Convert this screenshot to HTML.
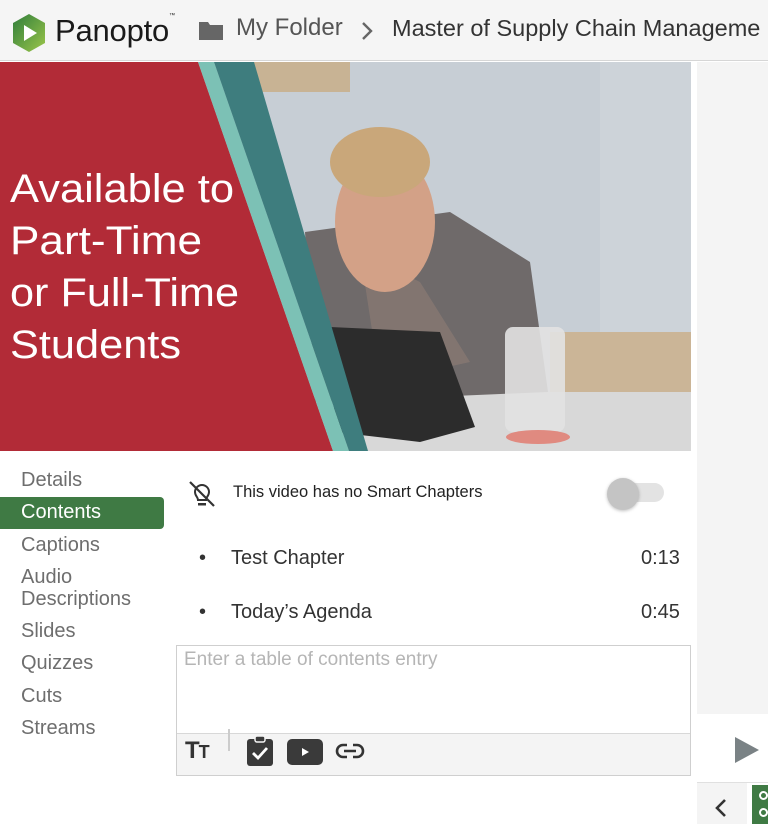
<!DOCTYPE html>
<html><head><meta charset="utf-8"><style>
*{margin:0;padding:0;box-sizing:border-box}
body{width:768px;height:824px;overflow:hidden;background:#fff;font-family:"Liberation Sans",Arial,sans-serif;position:relative}
.hdr{position:absolute;left:0;top:0;width:768px;height:61px;background:#f5f5f5;border-bottom:1px solid #d6d6d6}
.abs{position:absolute}
.nav div{position:absolute;left:21px;font-size:20px;color:#6e6e6e}
</style></head><body>
<div class="hdr">
 <svg class="abs" style="left:11px;top:13px" width="36" height="40" viewBox="0 0 36 40">
  <defs><linearGradient id="g" x1="0" y1="0" x2="1" y2="1"><stop offset="0" stop-color="#2f7d3b"/><stop offset="1" stop-color="#9cc64a"/></linearGradient></defs>
  <polygon points="18,1 34,10 34,30 18,39 2,30 2,10" fill="url(#g)"/>
  <polygon points="13,12 26,20 13,28" fill="#fff"/>
 </svg>
 <div class="abs" style="left:55px;top:13px;font-size:31px;color:#1a1a1a;letter-spacing:-0.2px">Panopto<span style="font-size:6px;vertical-align:top">™</span></div>
 <svg class="abs" style="left:199px;top:20px" width="24" height="20" viewBox="0 0 24 20"><path d="M0 2h9l2 3h13v15H0z" fill="#666"/></svg>
 <div class="abs" style="left:236px;top:14px;font-size:24px;color:#555">My Folder</div>
 <svg class="abs" style="left:360px;top:21px" width="14" height="20" viewBox="0 0 14 20"><path d="M3 2l8 8-8 8" stroke="#666" stroke-width="2.4" fill="none"/></svg>
 <div class="abs" style="left:392px;top:15px;font-size:23.5px;color:#333;white-space:nowrap">Master of Supply Chain Manageme</div>
</div>

<svg class="abs" style="left:0;top:62px" width="691" height="389" viewBox="0 0 691 389">
 <rect width="691" height="389" fill="#c7ced5"/>
 <rect x="250" y="0" width="100" height="30" fill="#c8b394"/>
 <rect x="600" y="0" width="91" height="280" fill="#cdd3d9"/>
 <rect x="550" y="270" width="141" height="80" fill="#cbb597"/>
 <rect x="300" y="330" width="391" height="59" fill="#d8d8d8"/>
 <path d="M305 170 L450 150 L530 200 L548 330 L315 340 Z" fill="#6f6a6a"/>
 <path d="M360 190 L420 220 L470 300 L380 320 Z" fill="#8a7b74" opacity=".7"/>
 <ellipse cx="385" cy="160" rx="50" ry="70" fill="#d3a187"/>
 <ellipse cx="380" cy="100" rx="50" ry="35" fill="#c9a77a"/>
 <path d="M330 265 L440 270 L475 365 L420 380 L335 370 Z" fill="#2c2c2c"/>
 <rect x="505" y="265" width="60" height="105" rx="8" fill="#e2e2e2" opacity=".9"/>
 <ellipse cx="538" cy="375" rx="32" ry="7" fill="#e08a80"/>
 <path d="M0 0 H198 L333 389 H0 Z" fill="#b22b37"/>
 <path d="M198 0 H214 L349 389 H333 Z" fill="#7cc1b5"/>
 <path d="M214 0 H254 L368 389 H349 Z" fill="#3e7d7e"/>
 <g fill="#fff" font-size="40" font-family="Liberation Sans, sans-serif">
  <text x="10" y="140" textLength="224" lengthAdjust="spacingAndGlyphs">Available to</text>
  <text x="10" y="192" textLength="192" lengthAdjust="spacingAndGlyphs">Part-Time</text>
  <text x="10" y="244" textLength="229" lengthAdjust="spacingAndGlyphs">or Full-Time</text>
  <text x="10" y="296" textLength="171" lengthAdjust="spacingAndGlyphs">Students</text>
 </g>
</svg>

<div class="abs" style="left:697px;top:62px;width:71px;height:652px;background:#f4f4f4"></div>
<svg class="abs" style="left:733px;top:735px" width="28" height="30"><polygon points="2,2 26,15 2,28" fill="#7a8285"/></svg>
<div class="abs" style="left:697px;top:782px;width:71px;height:1px;background:#e0e0e0"></div>
<div class="abs" style="left:697px;top:783px;width:50px;height:41px;background:#f4f4f4"></div>
<svg class="abs" style="left:714px;top:798px" width="14" height="20"><path d="M11 2L3 10l8 8" stroke="#333" stroke-width="2.6" fill="none"/></svg>
<div class="abs" style="left:752px;top:785px;width:16px;height:39px;background:#3f7a44"></div>
<div class="abs" style="left:759px;top:791px;width:9px;height:9px;border:2.5px solid #fff;border-radius:50%"></div>
<div class="abs" style="left:759px;top:808px;width:9px;height:9px;border:2.5px solid #fff;border-radius:50%"></div>

<div class="nav">
 <div style="top:469px">Details</div>
 <div class="abs" style="left:0;top:497px;width:164px;height:32px;background:#3f7a44;border-radius:0 4px 4px 0"></div>
 <div style="top:501px;color:#fff">Contents</div>
 <div style="top:534px">Captions</div>
 <div style="top:566px;line-height:22px">Audio<br>Descriptions</div>
 <div style="top:620px">Slides</div>
 <div style="top:652px">Quizzes</div>
 <div style="top:685px">Cuts</div>
 <div style="top:717px">Streams</div>
</div>

<svg class="abs" style="left:187px;top:479px" width="30" height="30" viewBox="0 0 30 30">
 <path d="M8 13a7 7 0 0 1 14 0c0 4-3 5-3 8h-8c0-3-3-4-3-8z" fill="none" stroke="#333" stroke-width="2"/>
 <rect x="11" y="24" width="8" height="2.5" fill="#333"/>
 <path d="M3 3L27 27" stroke="#333" stroke-width="2.2"/>
</svg>
<div class="abs" style="left:233px;top:483px;font-size:16.5px;color:#222">This video has no Smart Chapters</div>
<div class="abs" style="left:612px;top:483px;width:52px;height:19px;border-radius:10px;background:#e3e3e3"></div>
<div class="abs" style="left:607px;top:478px;width:32px;height:32px;border-radius:50%;background:#c4c4c4;box-shadow:0 1px 3px rgba(0,0,0,.25)"></div>

<div class="abs" style="left:199px;top:547px;font-size:20px;color:#333">•</div>
<div class="abs" style="left:231px;top:547px;font-size:20px;color:#333">Test Chapter</div>
<div class="abs" style="left:641px;top:547px;font-size:20px;color:#333">0:13</div>
<div class="abs" style="left:199px;top:601px;font-size:20px;color:#333">•</div>
<div class="abs" style="left:231px;top:601px;font-size:20px;color:#333">Today’s Agenda</div>
<div class="abs" style="left:641px;top:601px;font-size:20px;color:#333">0:45</div>

<div class="abs" style="left:176px;top:645px;width:515px;height:131px;border:1px solid #cfcfcf;background:#fff"></div>
<div class="abs" style="left:184px;top:649px;font-size:19px;color:#b5b5b5">Enter a table of contents entry</div>
<div class="abs" style="left:177px;top:733px;width:513px;height:42px;background:#f4f4f4;border-top:1px solid #d8d8d8"></div>
<div class="abs" style="left:228px;top:729px;width:2px;height:22px;background:#ccc"></div>
<div class="abs" style="left:185px;top:737px;font-size:24px;font-weight:bold;color:#333;letter-spacing:-1px">T<span style="font-size:18px">T</span></div>
<svg class="abs" style="left:245px;top:735px" width="30" height="32" viewBox="0 0 30 32">
 <rect x="2" y="4" width="26" height="27" rx="3" fill="#3a3a3a"/>
 <rect x="10" y="1" width="10" height="6" rx="2" fill="#3a3a3a" stroke="#f4f4f4" stroke-width="1.5"/>
 <path d="M8 18l5 5 9-10" stroke="#fff" stroke-width="2.8" fill="none"/>
</svg>
<svg class="abs" style="left:286px;top:738px" width="38" height="28" viewBox="0 0 38 28">
 <rect x="1" y="1" width="36" height="26" rx="5" fill="#3a3a3a"/>
 <polygon points="16,10 23,14 16,18" fill="#fff"/>
</svg>
<svg class="abs" style="left:334px;top:741px" width="32" height="20" viewBox="0 0 32 20">
 <path d="M13 4H9a6 6 0 0 0 0 12h4M19 4h4a6 6 0 0 1 0 12h-4M10 10h12" stroke="#333" stroke-width="2.6" fill="none"/>
</svg>
</body></html>
